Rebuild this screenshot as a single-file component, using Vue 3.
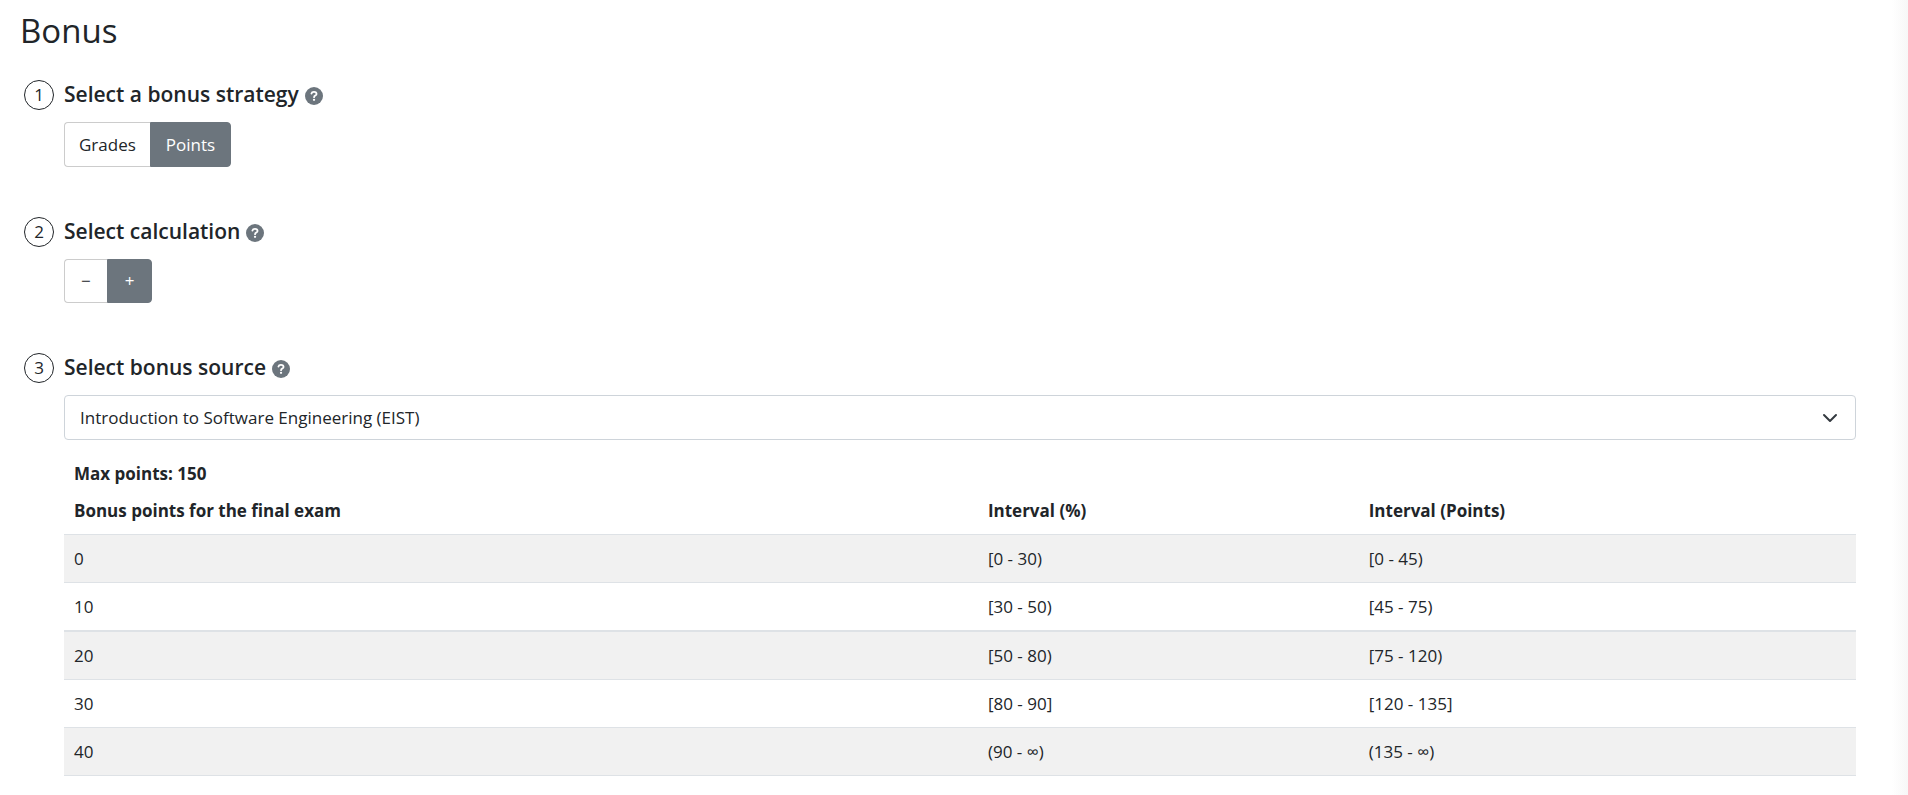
<script setup>
import { ref } from "vue";

const strategy = ref("Points");
const calculation = ref("+");
const source = ref("eist");

const strategies = ["Grades", "Points"];
const calculations = ["−", "+"];

const maxPoints = 150;
const gradeSteps = [
  { bonus: 0, percent: "[0 - 30)", points: "[0 - 45)" },
  { bonus: 10, percent: "[30 - 50)", points: "[45 - 75)" },
  { bonus: 20, percent: "[50 - 80)", points: "[75 - 120)", divider: true },
  { bonus: 30, percent: "[80 - 90]", points: "[120 - 135]" },
  { bonus: 40, percent: "(90 - ∞)", points: "(135 - ∞)" },
];
</script>

<template>
  <main class="page">
    <h1>Bonus</h1>

    <section class="step">
      <span class="number">1</span>
      <h2>
        Select a bonus strategy
        <svg class="help" viewBox="0 0 512 512">
          <circle cx="256" cy="256" r="256" />
          <path d="M184 187c8-31 32-47 70-47 43 0 74 22 74 58 0 48-70 44-70 91" />
          <circle class="dot" cx="257" cy="365" r="33" />
        </svg>
      </h2>
      <div class="content btn-group">
        <button
          v-for="item in strategies"
          :key="item"
          type="button"
          :class="{ active: strategy === item }"
          :aria-pressed="strategy === item"
          @click="strategy = item"
        >
          {{ item }}
        </button>
      </div>
    </section>

    <section class="step">
      <span class="number">2</span>
      <h2>
        Select calculation
        <svg class="help" viewBox="0 0 512 512">
          <circle cx="256" cy="256" r="256" />
          <path d="M184 187c8-31 32-47 70-47 43 0 74 22 74 58 0 48-70 44-70 91" />
          <circle class="dot" cx="257" cy="365" r="33" />
        </svg>
      </h2>
      <div class="content btn-group signs">
        <button
          v-for="item in calculations"
          :key="item"
          type="button"
          :class="{ active: calculation === item }"
          :aria-pressed="calculation === item"
          @click="calculation = item"
        >
          {{ item }}
        </button>
      </div>
    </section>

    <section class="step">
      <span class="number">3</span>
      <h2>
        <label for="source">Select bonus source</label>
        <svg class="help" viewBox="0 0 512 512">
          <circle cx="256" cy="256" r="256" />
          <path d="M184 187c8-31 32-47 70-47 43 0 74 22 74 58 0 48-70 44-70 91" />
          <circle class="dot" cx="257" cy="365" r="33" />
        </svg>
      </h2>
      <div class="content">
        <div class="select">
          <select id="source" v-model="source">
            <option value="eist">Introduction to Software Engineering (EIST)</option>
          </select>
          <svg class="chevron" viewBox="0 0 16 16">
            <path d="m2 5 6 6 6-6" />
          </svg>
        </div>

        <table>
          <colgroup>
            <col class="bonus" />
            <col class="percent" />
            <col />
          </colgroup>
          <thead>
            <tr>
              <th colspan="3">Max points: {{ maxPoints }}</th>
            </tr>
            <tr class="columns">
              <th>Bonus points for the final exam</th>
              <th>Interval (%)</th>
              <th>Interval (Points)</th>
            </tr>
          </thead>
          <tbody>
            <tr v-for="step in gradeSteps" :key="step.bonus" :class="{ divider: step.divider }">
              <td>{{ step.bonus }}</td>
              <td>{{ step.percent }}</td>
              <td>{{ step.points }}</td>
            </tr>
          </tbody>
        </table>
      </div>
    </section>
  </main>
</template>

<style>
body {
  margin: 0;
  background: #fff;
}
</style>

<style scoped>
.page {
  box-sizing: border-box;
  min-height: 100vh;
  padding: 8px 52px 8px 20px;
  font-family: "Open Sans", "Noto Sans", sans-serif;
  font-size: 17px;
  line-height: 27px;
  color: #212529;
  background: linear-gradient(to left, #f7f7f7, #fff) right / 16px 100% no-repeat;
}

h1 {
  margin: 0 0 26px;
  font-size: 33px;
  font-weight: 400;
  line-height: 46px;
}

.step {
  display: grid;
  grid-template-columns: 30px 1fr;
  column-gap: 10px;
  row-gap: 12px;
  margin: 0 0 50px 4px;
}

.step:last-child {
  margin-bottom: 0;
}

.number {
  box-sizing: border-box;
  height: 30px;
  border: 1px solid #212529;
  border-radius: 50%;
  line-height: 28px;
  text-align: center;
}

h2 {
  display: flex;
  align-items: flex-start;
  gap: 6px;
  margin: 0;
  font-size: 21px;
  font-weight: 600;
  line-height: 28px;
}

.help {
  width: 18px;
  height: 18px;
  margin-top: 7px;
  fill: #6c757d;
}

.help path {
  fill: none;
  stroke: #fff;
  stroke-width: 52;
  stroke-linecap: round;
}

.help .dot {
  fill: #fff;
}

.content {
  grid-column: 2;
}

.btn-group {
  display: flex;
}

.btn-group button {
  padding: 8px 14px;
  border: 1px solid #ccc;
  border-right: 0;
  border-radius: 4px 0 0 4px;
  background: #fff;
  color: #212529;
  font: inherit;
  cursor: pointer;
}

.btn-group button:last-child {
  padding: 8px 15px;
  border-right: 1px solid #ccc;
  border-radius: 0 4px 4px 0;
}

.btn-group button.active {
  border-color: #6c757d;
  background: #6c757d;
  color: #fff;
}

.signs button {
  padding: 8px 16px;
  line-height: 26px;
}

.signs button:last-child {
  padding: 8px 17px;
}

.select {
  display: grid;
  align-items: center;
}

.select > * {
  grid-area: 1 / 1;
}

select {
  appearance: none;
  width: 100%;
  height: 45px;
  padding: 0 48px 0 15px;
  border: 1px solid #ced4da;
  border-radius: 4px;
  background: #fff;
  color: #212529;
  font: inherit;
}

.chevron {
  justify-self: end;
  width: 16px;
  height: 16px;
  margin-right: 18px;
  fill: none;
  stroke: #343a40;
  stroke-width: 2;
  stroke-linecap: round;
  stroke-linejoin: round;
  pointer-events: none;
}

table {
  width: 100%;
  margin-top: 15px;
  border-collapse: separate;
  border-spacing: 0;
  table-layout: fixed;
}

th,
td {
  padding: 10px;
  text-align: left;
}

th {
  padding: 5px 10px;
  font-weight: 700;
}

.columns th {
  padding-bottom: 10px;
  border-bottom: 1px solid #dee2e6;
}

.bonus {
  width: 51%;
}

.percent {
  width: 21.25%;
}

td {
  border-bottom: 1px solid #dee2e6;
}

.divider td {
  border-top: 1px solid #dee2e6;
}

tbody tr:nth-child(odd) {
  background: #f1f1f1;
}
</style>
